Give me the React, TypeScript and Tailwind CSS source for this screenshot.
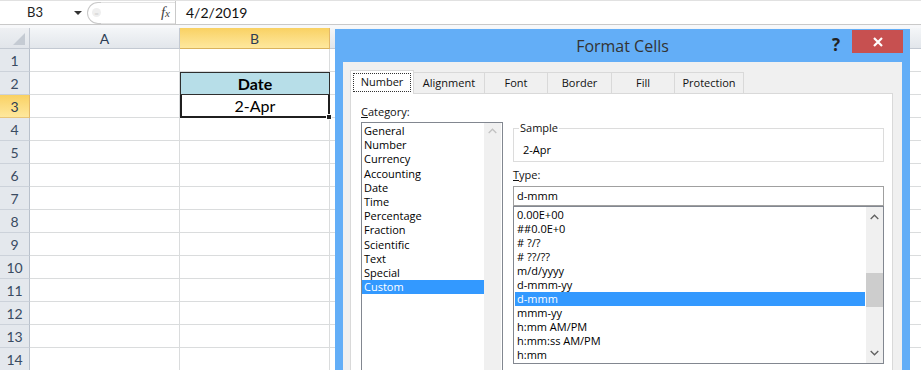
import React from "react";

const categories = ["General", "Number", "Currency", "Accounting", "Date", "Time", "Percentage", "Fraction", "Scientific", "Text", "Special", "Custom"];
const types = ["0.00E+00", "##0.0E+0", "# ?/?", "# ??/??", "m/d/yyyy", "d-mmm-yy", "d-mmm", "mmm-yy", "h:mm AM/PM", "h:mm:ss AM/PM", "h:mm"];

function ChevronUp({ color = "#555" }: { color?: string }) {
  return (
    <svg width="9" height="6" viewBox="0 0 9 6">
      <path d="M0.7 5 L4.5 1.2 L8.3 5" fill="none" stroke={color} strokeWidth="1.3" />
    </svg>
  );
}
function ChevronDown({ color = "#555" }: { color?: string }) {
  return (
    <svg width="9" height="6" viewBox="0 0 9 6">
      <path d="M0.7 1 L4.5 4.8 L8.3 1" fill="none" stroke={color} strokeWidth="1.3" />
    </svg>
  );
}

function FormulaBar() {
  return (
    <div className="h-[25px] shrink-0 flex border-t border-b border-t-[#e1e1e1] border-b-[#c9c9c9] bg-white">
      <div className="w-[87px] relative flex items-center">
        <span className="pl-[27px] text-[13px] text-[#222]">B3</span>
        <svg className="absolute left-[74px] top-[10px]" width="8" height="4" viewBox="0 0 8 4">
          <path d="M0 0H8L4 4Z" fill="#333" />
        </svg>
      </div>
      <div className="w-[88px] flex items-center">
        <div className="h-[22px] w-[14px] rounded-l-full border border-r-0 border-[#c9c9c9] bg-white flex items-center justify-end">
          <div className="w-[9px] h-[9px] rounded-full bg-[#efefef] flex items-center justify-center">
            <span className="text-[8px] leading-none text-[#cfcfcf]">=</span>
          </div>
        </div>
        <div className="flex-1 h-[22px] border-y border-[#e3e3e3] bg-white flex items-center justify-end pr-[5px]">
          <span className="italic font-['Liberation_Serif',serif] text-[15px] text-[#444] leading-none">
            f<span className="text-[11px]">x</span>
          </span>
        </div>
      </div>
      <div className="flex-1 border-l border-[#c9c9c9] flex items-center pl-[10px] text-[14px] text-[#111]">4/2/2019</div>
    </div>
  );
}

function HeaderRow() {
  return (
    <div className="h-[21px] shrink-0 flex">
      <div className="w-[30px] relative bg-linear-to-b from-[#eef0f3] to-[#e1e5ea] border-r border-b border-[#c3c9d2]">
        <svg className="absolute right-[4px] bottom-[3px]" width="12" height="12" viewBox="0 0 12 12">
          <path d="M12 0L12 12L0 12Z" fill="#c5cbd3" />
        </svg>
      </div>
      <div className="w-[150px] border-r border-b border-[#c3c9d2] bg-linear-to-b from-[#f4f6f8] to-[#e2e6eb] flex items-center justify-center text-[14px] text-[#2c3c54]">
        A
      </div>
      <div className="w-[150px] border-r border-r-[#e2b86a] border-b border-b-[#d9b25c] bg-linear-to-b from-[#f9d162] to-[#fee89d] flex items-center justify-center text-[14px] text-[#2c3c54]">
        B
      </div>
      <div className="flex-1 border-b border-[#c3c9d2] bg-linear-to-b from-[#f4f6f8] to-[#e2e6eb]" />
    </div>
  );
}

function Row({ n }: { n: number }) {
  return (
    <div className="h-[23px] shrink-0 flex">
      {n === 3 ? (
        <div className="w-[30px] border-r border-r-[#e2b86a] border-b border-b-[#e8c57a] bg-linear-to-b from-[#f9d162] to-[#fee89d] flex items-center justify-center text-[14px] text-[#2c3c54]">
          {n}
        </div>
      ) : (
        <div className="w-[30px] border-r border-b border-r-[#b9c1cc] border-b-[#ccd2da] bg-[#e4e8ed] flex items-center justify-center text-[14px] text-[#3a4b62]">
          {n}
        </div>
      )}
      <div className="w-[150px] border-r border-b border-[#dadcdd]" />
      {n === 2 ? (
        <div className="w-[150px] bg-[#b7dee8] border border-[#2e2e2e] flex items-center justify-center text-[16px] font-bold text-black">
          Date
        </div>
      ) : n === 3 ? (
        <div className="w-[150px] relative border-2 border-t-0 border-[#1f1f1f] flex items-center justify-center text-[16px] text-black">
          2-Apr
          <div className="absolute -right-[4px] -bottom-[4px] w-[6px] h-[6px] bg-[#1f1f1f] border border-white" />
        </div>
      ) : (
        <div className="w-[150px] border-r border-b border-[#dadcdd]" />
      )}
      <div className="flex-1 border-b border-[#dadcdd]" />
    </div>
  );
}

function Tabs() {
  return (
    <div className="h-[23px] shrink-0 flex items-end relative z-10 text-[11px] text-[#111]">
      <div className="w-[64px] h-[24px] -mb-[1px] bg-white border border-b-0 border-[#d9d9d9] flex items-start justify-center pt-[2px]">
        <div className="w-[58px] h-[19px] border border-dotted border-[#333] flex items-center justify-center">Number</div>
      </div>
      <div className="w-[71px] h-[21px] bg-[#f0f0f0] border border-l-0 border-b-0 border-[#d9d9d9] flex items-center justify-center">Alignment</div>
      <div className="w-[63px] h-[21px] bg-[#f0f0f0] border border-l-0 border-b-0 border-[#d9d9d9] flex items-center justify-center">Font</div>
      <div className="w-[64px] h-[21px] bg-[#f0f0f0] border border-l-0 border-b-0 border-[#d9d9d9] flex items-center justify-center">Border</div>
      <div className="w-[63px] h-[21px] bg-[#f0f0f0] border border-l-0 border-b-0 border-[#d9d9d9] flex items-center justify-center">Fill</div>
      <div className="w-[69px] h-[21px] bg-[#f0f0f0] border border-l-0 border-b-0 border-[#d9d9d9] flex items-center justify-center">Protection</div>
    </div>
  );
}

function Dialog() {
  return (
    <div className="absolute left-[335px] top-[29px] w-[575px] h-[341px] bg-[#63aef7] flex flex-col font-['Open_Sans',sans-serif]">
      <div className="h-[33px] shrink-0 relative flex items-center justify-center">
        <span className="text-[16px] text-[#333] leading-none">Format Cells</span>
        <span className="absolute left-[497px] top-[5px] text-[17px] font-bold text-[#222] leading-[22px]">?</span>
        <div className="absolute left-[517px] top-[1px] w-[51px] h-[23px] bg-[#c75050] flex items-center justify-center">
          <svg width="10" height="10" viewBox="0 0 10 10">
            <path d="M1 1L9 9M9 1L1 9" stroke="white" strokeWidth="2.2" />
          </svg>
        </div>
      </div>
      <div className="flex-1 mx-[8px] bg-[#f0f0f0] pt-[8px] pl-[7px] pr-[9px] flex flex-col">
        <Tabs />
        <div className="flex-1 bg-white border border-b-0 border-[#d9d9d9] flex pl-[10px] pt-[10px] text-[11px] text-black">
          <div className="w-[142px] flex flex-col">
            <div className="h-[16px] leading-[16px] text-[#111]">
              <span className="underline">C</span>ategory:
            </div>
            <div className="mt-[2px] flex-1 border border-b-0 border-[#828790] flex">
              <div className="flex-1 pt-[1px]">
                {categories.map((c) => (
                  <div
                    key={c}
                    className={
                      c === "Custom"
                        ? "h-[14.2px] leading-[14px] px-[2px] bg-[#3399ff] text-white"
                        : "h-[14.2px] leading-[14px] px-[2px]"
                    }
                  >
                    {c}
                  </div>
                ))}
              </div>
              <div className="w-[17px] mr-[1px] bg-[#f0f0f0] flex justify-center pt-[5px]">
                <ChevronUp color="#c2c2c2" />
              </div>
            </div>
          </div>
          <div className="ml-[10px] w-[371px] flex flex-col pt-[24px]">
            <div className="h-[34px] shrink-0 relative border border-[#dcdcdc] pl-[9px] pt-[13px] leading-[16px]">
              <span className="absolute left-[5px] -top-[9px] bg-white px-[1px] leading-[16px] text-[#111]">Sample</span>
              2-Apr
            </div>
            <div className="mt-[5px] h-[16px] leading-[16px] text-[#111]">
              <span className="underline">T</span>ype:
            </div>
            <div className="mt-[3px] h-[20px] shrink-0 border border-[#a0a0a0] flex items-center pl-[3px]">d-mmm</div>
            <div className="h-[158px] shrink-0 border border-[#828790] flex">
              <div className="flex-1 pt-[1px] px-[1px]">
                {types.map((t) => (
                  <div
                    key={t}
                    className={
                      t === "d-mmm"
                        ? "h-[14px] leading-[14px] px-[2px] bg-[#3399ff] text-white"
                        : "h-[14px] leading-[14px] px-[2px]"
                    }
                  >
                    {t}
                  </div>
                ))}
              </div>
              <div className="w-[17px] bg-[#f0f0f0] relative flex flex-col items-center justify-between py-[7px]">
                <ChevronUp color="#606060" />
                <div className="absolute left-0 top-[66px] w-[17px] h-[34px] bg-[#cdcdcd]" />
                <ChevronDown color="#606060" />
              </div>
            </div>
          </div>
        </div>
      </div>
    </div>
  );
}

export default function App() {
  return (
    <div className="relative w-[921px] h-[378px] overflow-hidden bg-white">
      <div className="h-[370px] overflow-hidden flex flex-col font-[Lato,sans-serif]">
        <FormulaBar />
        <div className="h-[3px] shrink-0 bg-[#f7f8fa]" />
        <HeaderRow />
        {Array.from({ length: 14 }, (_, i) => (
          <Row key={i} n={i + 1} />
        ))}
      </div>
      <Dialog />
    </div>
  );
}
